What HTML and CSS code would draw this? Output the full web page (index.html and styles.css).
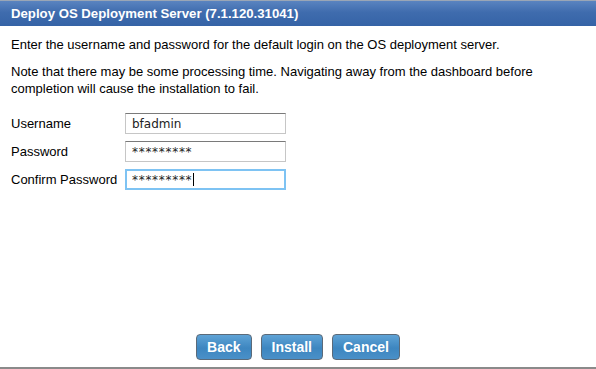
FILE: index.html
```html
<!DOCTYPE html>
<html lang="en">
<head>
    <meta charset="UTF-8">
    <title>Deploy OS Deployment Server</title>
    <link rel="stylesheet" href="styles.css">
</head>
<body>
    <div class="dialog">
        <div class="dialog-title">Deploy OS Deployment Server (7.1.120.31041)</div>
        <div class="dialog-body">
            <p>Enter the username and password for the default login on the OS deployment server.</p>
            <p>Note that there may be some processing time. Navigating away from the dashboard before completion will cause the installation to fail.</p>
            <form class="login-form">
                <label for="username">Username</label>
                <input type="text" id="username" value="bfadmin">
                <label for="password">Password</label>
                <input type="text" id="password" class="masked" value="*********">
                <label for="confirm">Confirm Password</label>
                <div class="field-focused">
                    <input type="text" id="confirm" class="masked" value="*********">
                    <span class="caret"></span>
                </div>
            </form>
        </div>
        <div class="dialog-buttons">
            <button type="button" class="btn">Back</button>
            <button type="button" class="btn">Install</button>
            <button type="button" class="btn">Cancel</button>
        </div>
    </div>
</body>
</html>
```

FILE: styles.css
```css
body { margin: 0; background: #fff; font-family: 'Liberation Sans', Arial, sans-serif; font-size: 13px; color: #000; }
.dialog { width: 596px; height: 369px; display: flex; flex-direction: column; box-sizing: border-box; border-bottom: 2px solid #8a8a8a; }
.dialog-title { height: 26px; box-sizing: border-box; padding: 5px 0 0 11px; border-top: 1px solid #9aa6b6; background: linear-gradient(#5a84c0, #3f6cae 45%, #3563a6); color: #fff; font-size: 13.2px; font-weight: bold; }
.dialog-body { flex: 1; padding: 10px 11px 0; }
.dialog-body p { margin: 0 0 10px; line-height: 17px; }
.dialog-body p + p { margin-bottom: 16px; }
.login-form { display: grid; grid-template-columns: 114px 161px; row-gap: 7px; align-items: center; }
.login-form label { line-height: 17px; }
.login-form input { width: 100%; height: 21px; box-sizing: border-box; margin: 0; padding: 0 6px; border: 1px solid #c6c6c6; border-top-color: #7a7a7a; font-family: 'DejaVu Sans', Verdana, sans-serif; font-size: 12px; color: #222; outline: none; }
.login-form input.masked { letter-spacing: 0.7px; }
.field-focused { position: relative; height: 21px; }
.field-focused input { border: 2px solid #7ec3f3; padding: 0 5px; }
.caret { position: absolute; left: 68px; top: 4px; width: 1px; height: 13px; background: #000; }
.dialog-buttons { display: flex; justify-content: center; gap: 9px; padding: 0 0 7px 0; }
.btn { height: 26px; padding: 0 10px; border: 1px solid #5b6a79; border-radius: 4px; background: linear-gradient(#5fa3d6, #3d86c0 55%, #4a90c8); color: #fff; font-family: 'Liberation Sans', Arial, sans-serif; font-size: 14px; font-weight: bold; cursor: pointer; }
```
